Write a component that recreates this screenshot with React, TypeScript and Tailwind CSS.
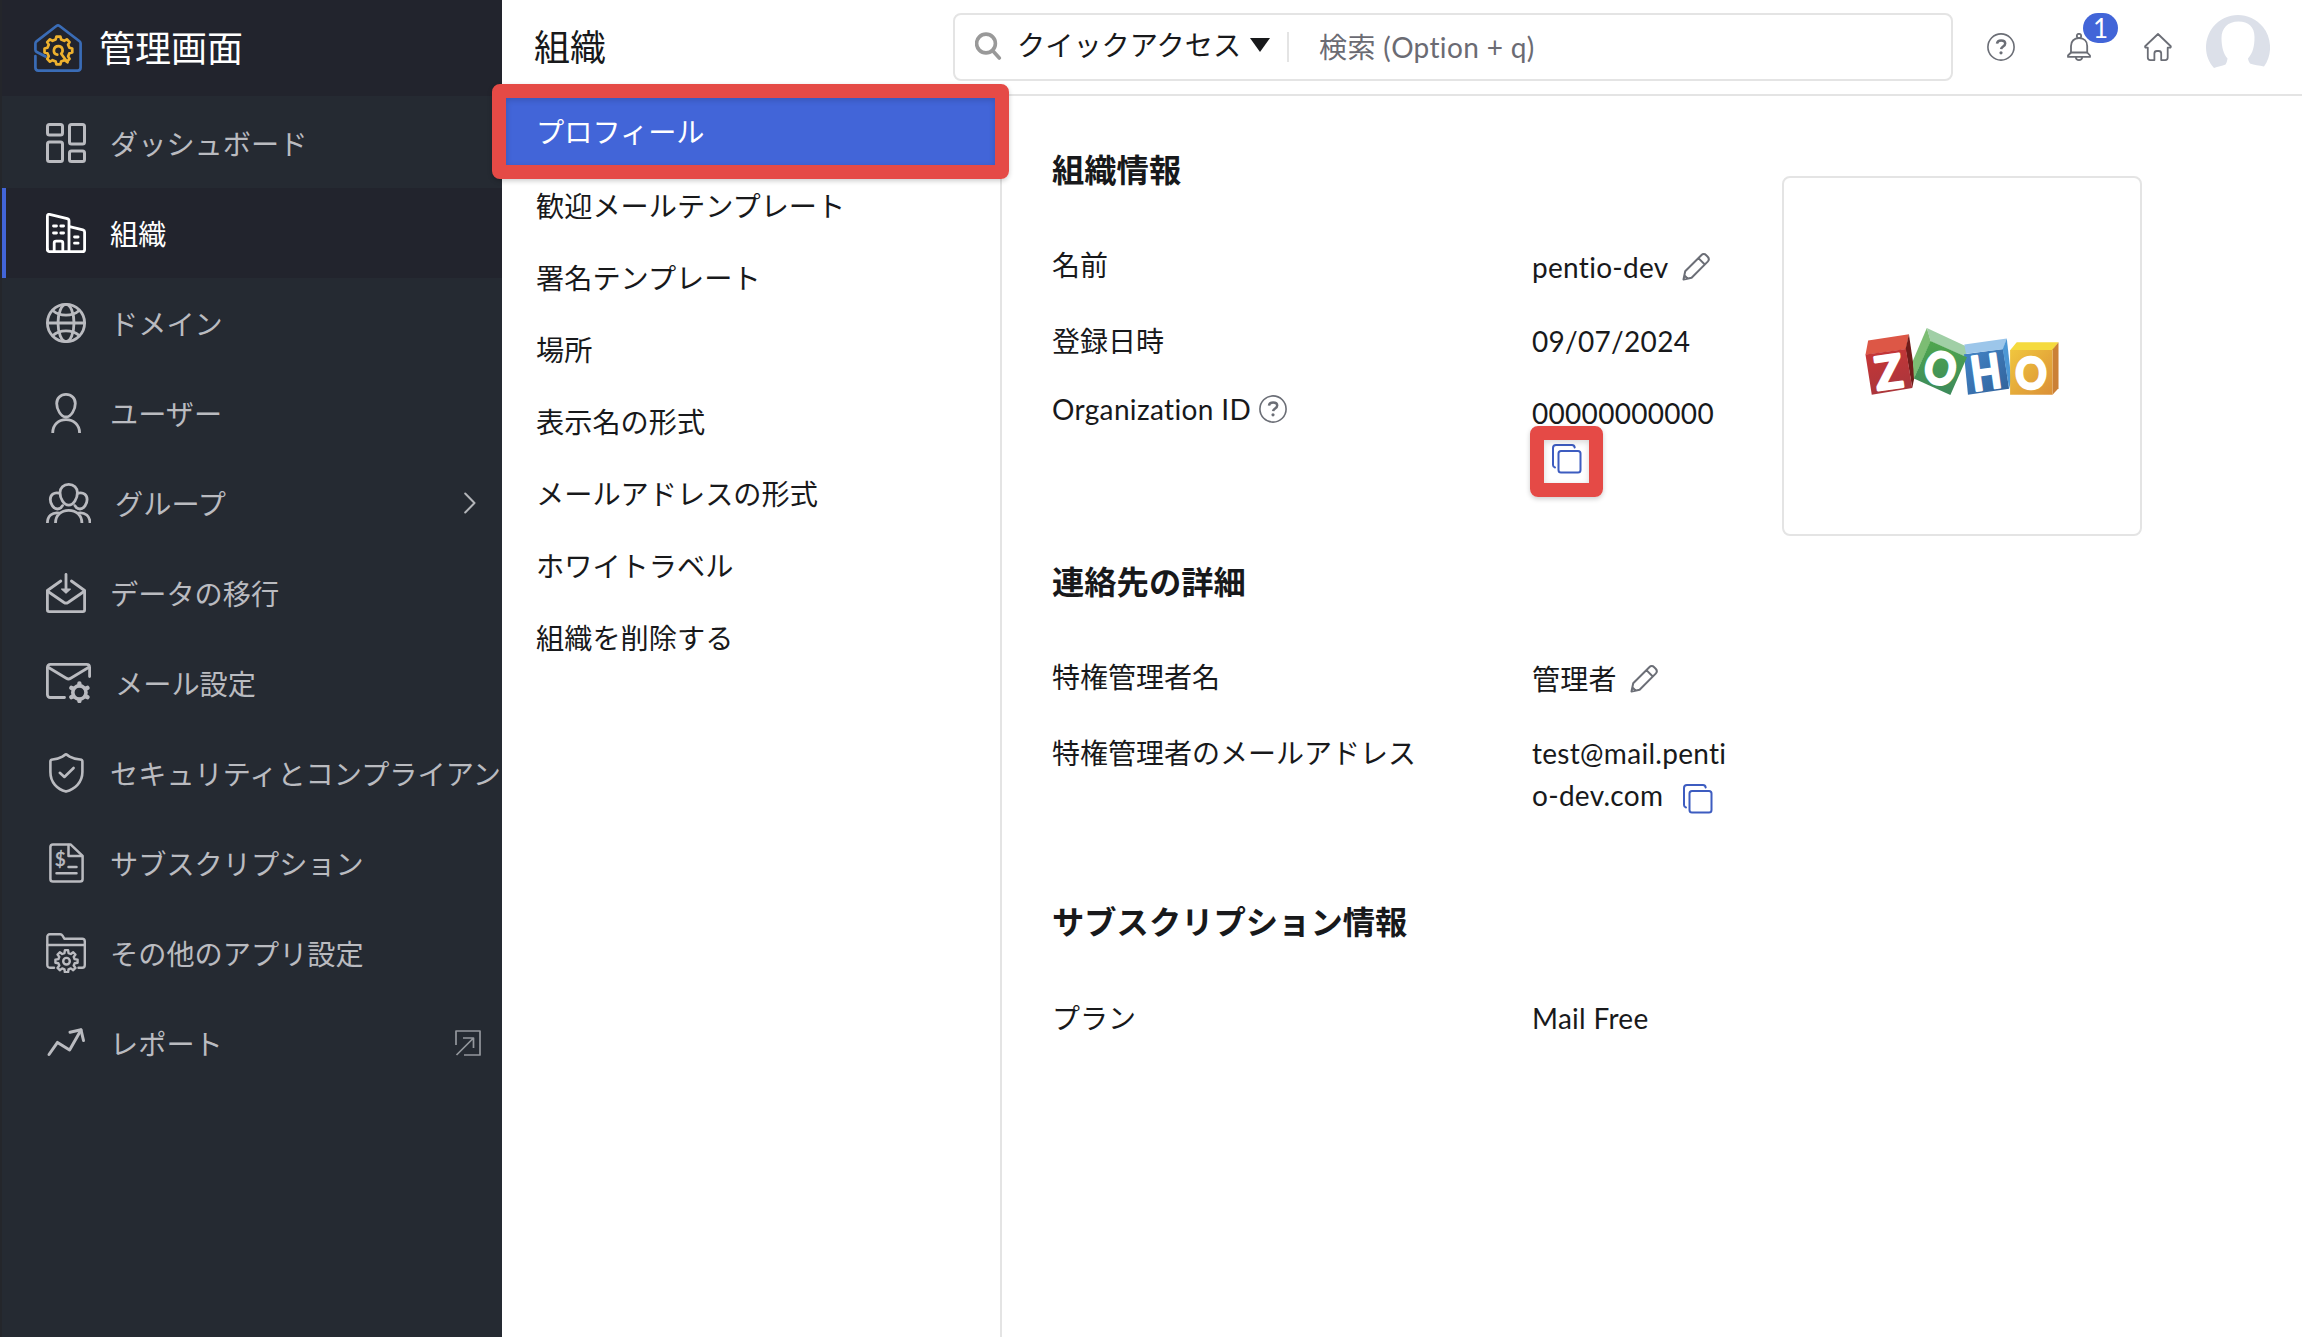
import React, { PropsWithChildren, ReactNode } from "react";

interface IconProps extends PropsWithChildren {
  width?: number;
  height?: number;
  stroke?: number;
  className?: string;
}

const Icon = ({
  width = 40,
  height = 40,
  stroke = 2.6,
  className = "",
  children,
}: IconProps) => (
  <svg
    width={width}
    height={height}
    viewBox={`0 0 ${width} ${height}`}
    fill="none"
    stroke="currentColor"
    strokeWidth={stroke}
    strokeLinecap="round"
    strokeLinejoin="round"
    className={`shrink-0 ${className}`}
  >
    {children}
  </svg>
);

const gearPath = (
  cx: number,
  cy: number,
  outer: number,
  inner: number,
  teeth: number
) => {
  const points: string[] = [];
  const step = (Math.PI * 2) / teeth;
  for (let i = 0; i < teeth; i++) {
    const a = i * step - Math.PI / 2;
    [
      [-0.31, inner],
      [-0.18, outer],
      [0.18, outer],
      [0.31, inner],
    ].forEach(([offset, r]) => {
      const t = a + offset * step;
      points.push(
        `${(cx + Math.cos(t) * r).toFixed(2)} ${(cy + Math.sin(t) * r).toFixed(2)}`
      );
    });
  }
  return `M${points.join("L")}Z`;
};

const DashboardIcon = () => (
  <Icon stroke={3}>
    <rect x="1.5" y="1.5" width="15" height="10.5" rx="2" />
    <rect x="23.5" y="1.5" width="15" height="19.5" rx="2" />
    <rect x="1.5" y="19" width="15" height="19.5" rx="2" />
    <rect x="23.5" y="28" width="15" height="10.5" rx="2" />
  </Icon>
);

const OrganizationIcon = () => (
  <Icon stroke={2.8}>
    <path d="M1.4 36.6V3.2c0-1.4.9-2.1 2.2-1.8l17.6 4.3c1.2.3 1.8 1.1 1.8 2.2v30.7" />
    <path d="M23.5 13.7l13.4 3.2c1.1.3 1.7 1 1.7 2.1v17.4c0 1.4-.8 2.2-2.2 2.2H3.6c-1.4 0-2.2-.8-2.2-2.2" />
    <path d="M8.2 38V30c0-1.2.7-1.9 1.9-1.9h4.8c1.2 0 1.9.7 1.9 1.9v8" />
    <path d="M7.5 13h3M14.8 13h2.8M7.5 20h3M14.8 20h2.8M28.5 24h3.6M28.5 30.2h3.6" />
  </Icon>
);

const GlobeIcon = () => (
  <Icon stroke={2.8}>
    <circle cx="20" cy="20" r="18.6" />
    <ellipse cx="20" cy="20" rx="8" ry="18.6" />
    <path d="M1.4 20h37.2M6.8 7.5c7 6.2 19.4 6.2 26.4 0M6.8 32.5c7-6.2 19.4-6.2 26.4 0" />
  </Icon>
);

const UserIcon = () => (
  <Icon stroke={2.8}>
    <path d="M20 1.4c5.5 0 9.3 3.9 9.3 9 0 5.8-4 13.6-9.3 13.6s-9.3-7.8-9.3-13.6c0-5.1 3.800-9 9.300-9z" />
    <path d="M6.7 40C6.7 32 12.4 26.7 20 26.7S33.6 32 33.600 40" strokeLinecap="butt" />
  </Icon>
);

const GroupIcon = () => (
  <Icon width={45} stroke={2.8}>
    <path d="M22.7 1.4c5.2 0 8.7 3.6 8.700 8.300 0 5.600-3.700 12.500-8.700 12.500S14 15.300 14 9.700c0-4.700 3.500-8.300 8.700-8.300z" />
    <path d="M13.2 10.2C7.8 8.8 4.3 12 4.3 16.5c0 4.4 3.2 9.5 7.2 9.5 2 0 3.8-1.200 5-3.400" />
    <path d="M32.2 10.2c5.4-1.4 8.9 1.8 8.9 6.3 0 4.4-3.2 9.5-7.2 9.500-2 0-3.800-1.200-5-3.400" />
    <path
      d="M9.5 40c0-7.6 5.6-12.6 13.2-12.6S35.9 32.400 35.900 40M1.400 40c0-6.600 4.600-11.300 12-9.900M44 40c0-6.600-4.600-11.300-12-9.900"
      strokeLinecap="butt"
    />
  </Icon>
);

const MigrationIcon = () => (
  <Icon stroke={2.8}>
    <path d="M14.8 8L1.4 17.5V36.8c0 1.1.7 1.8 1.8 1.8h33.6c1.100 0 1.800-.7 1.800-1.800V17.500L25.400 8" />
    <path d="M2 18.5l16 11c1.4.9 2.6.9 4 0l16-11" />
    <path d="M20 1.4V16" />
    <path d="M15.600 16h8.800L20 20z" fill="currentColor" strokeWidth={1.2} />
  </Icon>
);

const MailSettingsIcon = () => (
  <Icon width={45} stroke={2.8}>
    <path d="M18.500 34.500H4.400c-1.900 0-3-1.100-3-3V4.400c0-1.900 1.100-3 3-3h36.200c1.900 0 3 1.100 3 3v9.200" />
    <path d="M2.500 4.500l17.800 10.800c1.500.9 2.900.9 4.400 0L42.500 4.500" />
    <circle cx="33.400" cy="29.500" r="6.600" strokeWidth={3.6} />
    <path
      d="M33.400 22v-1.500M33.400 37v1M26.900 25.700l-1.500-.9M39.900 25.700l1.500-.9M26.900 33.300l-1.500.9M39.900 33.300l1.500.9"
      strokeWidth={4.4}
    />
  </Icon>
);

const ShieldIcon = () => (
  <Icon stroke={2.6}>
    <path d="M20 1.4c1 0 1.3.9 3.6 2.2 3 1.7 6.800 2.600 10.600 2.900 1.400.1 2.200.8 2.200 2.100V19c0 10.500-7.600 17.200-16.400 19.600C11.200 36.200 4.400 29.500 4.400 19V8.600c0-1.300.8-2 2.200-2.100 3.800-.3 6.800-1.200 9.800-2.900C18.700 2.300 19 1.400 20 1.400z" />
    <path d="M13.8 19.8l4.6 4.2 9.200-9" />
  </Icon>
);

const InvoiceIcon = () => (
  <Icon stroke={2.5}>
    <path d="M24.500 1.400H7c-1.600 0-2.600 1-2.600 2.600v32c0 1.600 1 2.600 2.600 2.600h27c1.600 0 2.600-1 2.600-2.600V12.800z" />
    <path d="M22.500 2v11h13.500" />
    <path d="M22.500 24h8M10.500 30.200h20" />
    <text
      x="14.200"
      y="22.800"
      textAnchor="middle"
      fontSize="19"
      fontFamily="Lato"
      fill="currentColor"
      strokeWidth={0.5}
    >
      $
    </text>
  </Icon>
);

const AppSettingsIcon = () => (
  <Icon stroke={2.4}>
    <path d="M8 34.700H4c-1.700 0-2.700-1-2.700-2.700V3.800c0-1.500.9-2.500 2.500-2.500h10.400c1 0 1.700.4 2.300 1.300l2 3.200h17.700c1.600 0 2.600 1 2.600 2.600V32c0 1.700-1 2.700-2.600 2.700h-3.700" />
    <path d="M1.400 12h37.200" />
    <path d={gearPath(20.5, 28.2, 11.2, 8.4, 8)} />
    <circle cx="20.500" cy="28.200" r="3.300" />
  </Icon>
);

const ReportIcon = () => (
  <Icon stroke={3}>
    <path d="M3 31.500L11.500 19.400 23.600 27 35 7" />
    <path d="M24 9.200L35 6.800 37.500 17.500" />
  </Icon>
);

const ExternalIcon = () => (
  <Icon width={26} height={26} stroke={1.7} className="mr-[1px] text-[#94979d]">
    <path d="M1 15V1h24v24H9M1.500 25L18 8.500M8 8h10.500v10" strokeLinecap="butt" />
  </Icon>
);

const ChevronIcon = () => (
  <Icon width={12} height={22} stroke={2} className="mr-[6px] text-[#b3b5b9]">
    <path d="M1.200 1.500L10.500 11l-9.300 9.500" />
  </Icon>
);

const AdminLogo = () => (
  <svg
    width="48"
    height="48"
    viewBox="0 0 48 48"
    fill="none"
    strokeWidth="2.7"
    strokeLinecap="round"
    strokeLinejoin="round"
  >
    <path
      stroke="#3a6cb6"
      d="M11.500 32.500L2.800 28c-1-.5-1.400-1.200-1.400-2.200V19.500c0-1 .3-1.600 1.100-2.200L22.400 2c1.100-.8 2.100-.8 3.200 0l19.900 15.300c.8.600 1.100 1.200 1.100 2.200v24c0 2-1 3.100-3 3.100H4.400c-2 0-3-1.100-3-3.100V32"
    />
    <path
      stroke="#eeb12e"
      d="M33.500 38.300l-6.300-8.500M27.200 29.800c2.700-2.700 1.300-7.700-2.700-7.700-5.400 0-6.400 7.600-1.200 8.600"
    />
    <path stroke="#eeb12e" d={gearPath(24.4, 26.5, 14, 11.3, 8)} />
  </svg>
);

const ZohoLogo = () => (
  <svg
    width="194"
    height="67"
    viewBox="285 503 582 202"
    className="mt-[11px] overflow-visible"
  >
    <defs>
      <linearGradient id="red" x1="0" y1="0" x2="0.3" y2="1">
        <stop offset="0" stopColor="#c93636" />
        <stop offset="1" stopColor="#ab363c" />
      </linearGradient>
      <linearGradient id="green" x1="0" y1="0" x2="0" y2="1">
        <stop offset="0" stopColor="#4fa64e" />
        <stop offset="1" stopColor="#3d8a5b" />
      </linearGradient>
      <linearGradient id="blue" x1="0" y1="0" x2="1" y2="1">
        <stop offset="0" stopColor="#4386c8" />
        <stop offset="1" stopColor="#31619a" />
      </linearGradient>
      <linearGradient id="yellow" x1="0" y1="0" x2="1" y2="1">
        <stop offset="0" stopColor="#f0c63e" />
        <stop offset="1" stopColor="#db9037" />
      </linearGradient>
    </defs>
    <path fill="#dd5746" d="M293 541L416 522 407 567 285 584z" />
    <path fill="#701c1a" d="M416 522L434 645 426 684 406 566z" />
    <path fill="url(#red)" d="M285 583L407 566 426 684 304 704z" />
    <path fill="#7cbd73" d="M470 503L482 542 431 656 428 602z" />
    <path fill="#a0cfa6" d="M470 503L588 558 591 592 481 543z" />
    <path fill="url(#blue)" d="M582 582L700 566 718 686 594 704z" />
    <path fill="#9cc6ea" d="M583 553L711 535 700 567 588 581z" />
    <path fill="#4c97d5" d="M711 535L725 660 718 686 699 566z" />
    <path fill="url(#green)" d="M481 542L591 591 541 705 431 655z" />
    <path fill="#f5da3e" d="M741 546H867L849 570H721z" />
    <path fill="#cb8036" d="M867 546V685L849 704V568z" />
    <path fill="url(#yellow)" d="M721 569H849V704H721z" />
    <g
      fill="#fff"
      stroke="#fff"
      strokeWidth="8"
      strokeLinejoin="round"
      fontFamily="Lato"
      fontWeight="700"
      fontSize="138"
      textAnchor="middle"
    >
      <text transform="translate(362 685) rotate(-8)">Z</text>
      <text transform="translate(499 671) rotate(14) scale(0.88 1)" fontSize="134">
        O
      </text>
      <text transform="translate(655 687) rotate(-8) scale(0.82 1)" fontSize="142">
        H
      </text>
      <text transform="translate(784 686) scale(0.88 1)" fontSize="134">
        O
      </text>
    </g>
  </svg>
);

const HelpIcon = () => (
  <Icon width={28} height={28} stroke={1.6} className="text-[#6b6e76]">
    <circle cx="14" cy="14" r="13.100" />
    <path
      d="M10 10.600c.3-2.200 2-3.200 4.100-3.200 2.300 0 4.100 1.200 4.100 3.200 0 3-3.900 2.800-4.100 5.600"
      strokeWidth={2.5}
      strokeLinecap="butt"
    />
    <circle cx="14" cy="19.800" r="1.600" fill="currentColor" stroke="none" />
  </Icon>
);

const PencilIcon = () => (
  <Icon width={28} height={28} stroke={2} className="text-[#6b6e76]">
    <path d="M1.500 26.500l1.700-8.200L19.300 2.200c1.500-1.500 3.400-1.500 4.900 0l1.500 1.500c1.400 1.500 1.400 3.400 0 4.900L9.600 24.700zM16.400 5.100l6.400 6.400M2.500 22.500l3 3" />
  </Icon>
);

const CopyIcon = () => (
  <Icon width={30} height={30} stroke={2} className="text-[#3d5cc0]">
    <rect x="6.500" y="7" width="22" height="21.500" rx="2.500" />
    <path d="M3 23.500c-1.300-.4-2-1.200-2-2.500V4c0-2 1-3 3-3h16c1.500 0 2.400.8 2.700 2.500" />
  </Icon>
);

const BellIcon = () => (
  <Icon width={24} height={28} stroke={1.8} className="text-[#6b6e76]">
    <circle cx="12" cy="3" r="2.200" />
    <path d="M4 19.500V13c0-5 3.200-7.800 8-7.800s8.200 2.800 8.200 7.800v6.500" />
    <path d="M4 19.500h16.200l2.800 3v1.400H1v-1.400zM8.800 24.500c.2 1.700 1.400 2.600 3.200 2.600s3-.9 3.200-2.600" />
  </Icon>
);

const HomeIcon = () => (
  <Icon width={28} height={28} stroke={1.8} className="text-[#6b6e76]">
    <path d="M14 1L1.400 13c-.6.600-.3 1.700.8 1.700h1.600v9.900c0 1.600.9 2.500 2.500 2.500h4.100v-6.600c0-1.600.9-2.500 2.500-2.500h1.800c1.600 0 2.500.9 2.500 2.500v6.600h4c1.600 0 2.500-.9 2.500-2.500v-9.900h2c1.100 0 1.400-1.100.8-1.700z" />
  </Icon>
);

const Avatar = () => (
  <svg width="64" height="64" viewBox="0 0 64 64">
    <path
      fill="#dce0e9"
      d="M8 53C-2.500 42-2.500 24 7 12 20-4 44-4 57 12c9 11 9.500 28 1 39.500-4.500-1-10-1.500-14-3-1-1.500-1.700-3-2-5C47 38 48.500 31 48.500 22c0-10-6-15.500-16-15.500C22 6.500 15.500 13 15.500 23c0 9 2 16 6 20.500-.3 2.500-1 4.500-2 6-3.500 1.500-7.500 2-11.500 3.500z"
    />
  </svg>
);

interface NavItem {
  label: string;
  icon: ReactNode;
  trailing?: ReactNode;
  active?: boolean;
}

const NAV_ITEMS: NavItem[] = [
  { label: "ダッシュボード", icon: <DashboardIcon /> },
  { label: "組織", icon: <OrganizationIcon />, active: true },
  { label: "ドメイン", icon: <GlobeIcon /> },
  { label: "ユーザー", icon: <UserIcon /> },
  { label: "グループ", icon: <GroupIcon />, trailing: <ChevronIcon /> },
  { label: "データの移行", icon: <MigrationIcon /> },
  { label: "メール設定", icon: <MailSettingsIcon /> },
  { label: "セキュリティとコンプライアン", icon: <ShieldIcon /> },
  { label: "サブスクリプション", icon: <InvoiceIcon /> },
  { label: "その他のアプリ設定", icon: <AppSettingsIcon /> },
  { label: "レポート", icon: <ReportIcon />, trailing: <ExternalIcon /> },
];

const MENU_ITEMS = [
  "プロフィール",
  "歓迎メールテンプレート",
  "署名テンプレート",
  "場所",
  "表示名の形式",
  "メールアドレスの形式",
  "ホワイトラベル",
  "組織を削除する",
];

const Sidebar = () => (
  <aside className="flex w-[502px] shrink-0 flex-col overflow-hidden border-l-2 border-[#24262b] bg-[#252a32]">
    <div className="flex h-24 items-center gap-[17px] bg-[#22242d] pl-8">
      <AdminLogo />
      <h1 className="text-4xl leading-[48px] text-white">管理画面</h1>
    </div>
    <nav className="pt-[2px] text-[28.2px]">
      {NAV_ITEMS.map((item) => (
        <a
          key={item.label}
          className={`flex h-[90px] items-center border-l-4 pl-10 pr-5 ${
            item.active
              ? "border-[#4265d8] bg-[#22242d] text-white"
              : "border-transparent text-[#babbc0]"
          }`}
        >
          {item.icon}
          <span className="ml-6 mt-[2px] grow whitespace-nowrap">{item.label}</span>
          {item.trailing}
        </a>
      ))}
    </nav>
  </aside>
);

const TopBar = () => (
  <header className="flex h-24 shrink-0 items-center border-b-2 border-[#e4e4e4] pl-8">
    <h2 className="w-[419px] text-4xl leading-[48px]">組織</h2>
    <div className="flex h-[68px] w-[1000px] items-center rounded-lg border-2 border-[#e4e4e4] pl-5">
      <Icon width={27} height={28} stroke={3.6} className="-mt-[2px] text-[#999]">
        <circle cx="11" cy="11.500" r="9.400" />
        <path d="M17.500 18.500l6.800 7.500" />
      </Icon>
      <span className="-mt-1 ml-[15px] text-[28.2px]">クイックアクセス</span>
      <svg width="20" height="14" viewBox="0 0 20 14" className="-mt-1 ml-[9px]">
        <path d="M0 0h20L10 14z" fill="#18191b" />
      </svg>
      <span className="ml-[17px] h-[30px] w-[2px] bg-[#e4e4e4]" />
      <span className="ml-[30px] tracking-[0.35px] text-[#6b6b73]">検索 (Option + q)</span>
    </div>
    <div className="ml-[34px] flex items-center">
      <HelpIcon />
      <div className="relative ml-[52px]">
        <BellIcon />
        <span className="absolute -top-5 left-4 flex h-[30px] w-[35px] items-center justify-center rounded-full bg-[#4265d8] text-[26px] leading-[30px] text-white">
          1
        </span>
      </div>
      <div className="ml-[53px]">
        <HomeIcon />
      </div>
      <div className="ml-[34px]">
        <Avatar />
      </div>
    </div>
  </header>
);

const Highlight = ({ className }: { className: string }) => (
  <span
    className={`pointer-events-none absolute z-10 rounded-lg border-[14px] border-[#e54a46] shadow-[0_2px_5px_rgba(0,0,0,0.2),inset_0_2px_6px_rgba(0,0,0,0.16)] ${className}`}
  />
);

const SubMenu = () => (
  <ul className="w-[500px] shrink-0 border-r-2 border-[#e4e4e4] text-[28.2px]">
    {MENU_ITEMS.map((label, index) => (
      <li
        key={label}
        className={`relative flex h-[72px] items-center pl-[34px] ${
          index === 0 ? "bg-[#4265d8] text-white" : ""
        }`}
      >
        <span className={index === 0 ? "" : "mt-1"}>{label}</span>
        {index === 0 && <Highlight className="-left-[10px] -top-[12px] h-[95px] w-[517px]" />}
      </li>
    ))}
  </ul>
);

interface RowProps extends PropsWithChildren {
  label: ReactNode;
  className?: string;
}

const Row = ({ label, className = "", children }: RowProps) => (
  <div className={`flex items-start ${className}`}>
    <dt className="flex w-[480px] shrink-0 items-center gap-2">{label}</dt>
    <dd className="w-[204px] tracking-[0.3px]">{children}</dd>
  </div>
);

const Profile = () => (
  <main className="flex grow items-start pl-[50px]">
    <div className="w-[730px] shrink-0">
      <section className="h-[412px] pt-[50px]">
        <h3 className="text-[32.3px] font-bold leading-[48px]">組織情報</h3>
        <dl className="pt-[50px]">
          <Row label="名前" className="h-[76px]">
            <div className="flex items-center gap-[13px] pt-[2px]">
              pentio-dev
              <PencilIcon />
            </div>
          </Row>
          <Row label="登録日時" className="h-[68px]">
            09/07/2024
          </Row>
          <Row
            label={
              <>
                <span className="tracking-[0.35px]">Organization ID</span>
                <HelpIcon />
              </>
            }
          >
            <div className="pt-1">00000000000</div>
            <div className="relative ml-5 mt-[10px] w-[30px]">
              <CopyIcon />
              <Highlight className="-left-[22px] -top-[18px] h-[71px] w-[73px]" />
            </div>
          </Row>
        </dl>
      </section>
      <section className="h-[340px] pt-[50px]">
        <h3 className="text-[32.3px] font-bold leading-[48px]">連絡先の詳細</h3>
        <dl className="pt-[50px]">
          <Row label="特権管理者名" className="h-[76px]">
            <div className="flex items-center gap-[13px] pt-[2px]">
              管理者
              <PencilIcon />
            </div>
          </Row>
          <Row label="特権管理者のメールアドレス">
            <span className="break-all">test@mail.pentio-dev.com</span>
            <span className="ml-5 inline-block align-middle">
              <CopyIcon />
            </span>
          </Row>
        </dl>
      </section>
      <section className="pt-[50px]">
        <h3 className="text-[32.3px] font-bold leading-[48px]">サブスクリプション情報</h3>
        <dl className="pt-[51px]">
          <Row label="プラン">Mail Free</Row>
        </dl>
      </section>
    </div>
    <div className="mt-20 flex size-[360px] items-center justify-center rounded-lg border-2 border-[#e4e4e4]">
      <ZohoLogo />
    </div>
  </main>
);

const App = () => (
  <div
    lang="ja"
    className="flex h-[1337px] w-[2302px] overflow-hidden bg-white font-['Lato','Noto_Sans_CJK_JP',sans-serif] text-[28px] leading-[42px] text-[#18191b]"
  >
    <Sidebar />
    <div className="flex grow flex-col">
      <TopBar />
      <div className="flex grow">
        <SubMenu />
        <Profile />
      </div>
    </div>
  </div>
);

export default App;
